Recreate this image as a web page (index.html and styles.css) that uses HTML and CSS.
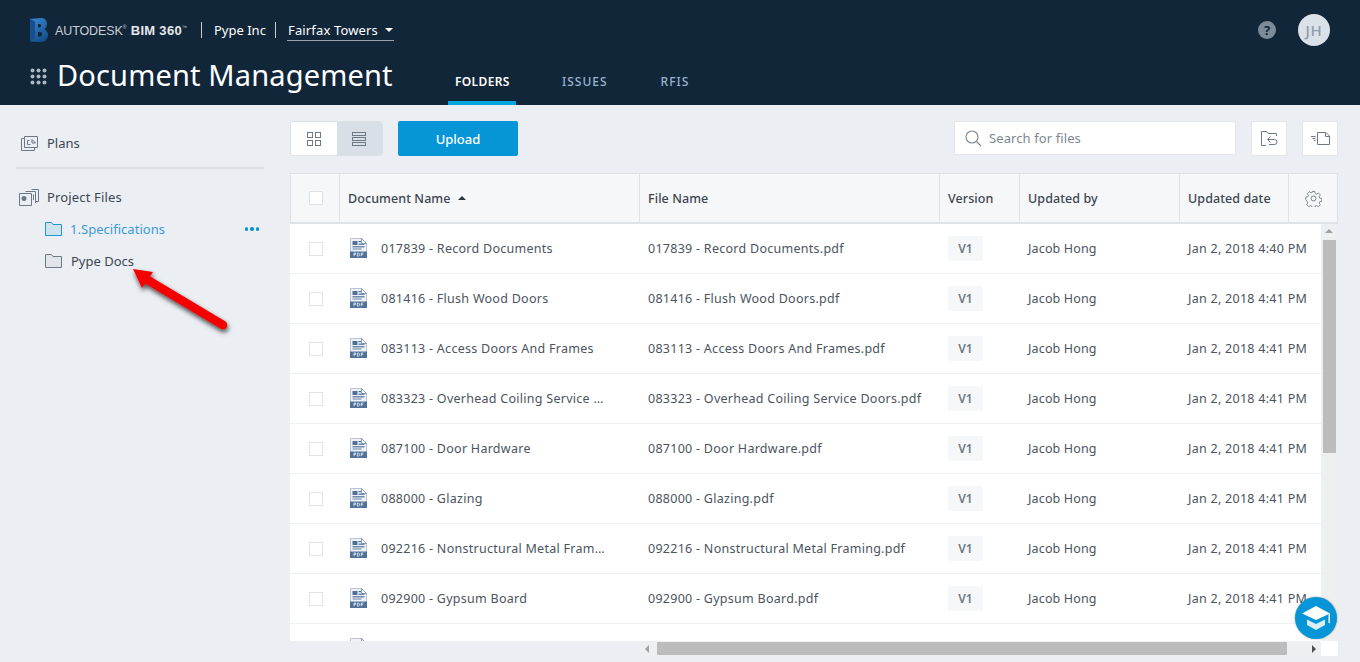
FILE: index.html
```html
<!DOCTYPE html>
<html lang="en">
<head>
<meta charset="utf-8">
<title>Document Management</title>
<link rel="stylesheet" href="styles.css">
</head>
<body>
<svg width="0" height="0" class="defs">
  <symbol id="pdf" viewBox="0 0 17 20">
    <path d="M0.5 0.5H11.5L16.5 5.5V19.5H0.5Z" fill="#eef2f6" stroke="#b5c3d2"/>
    <path d="M11.5 0.5V5.5H16.5Z" fill="#fff" stroke="#6f8cab" stroke-width=".8"/>
    <rect x="2.5" y="3" width="5" height="4" fill="#4f7199"/>
    <rect x="8.5" y="3" width="2.5" height="1.2" fill="#4f7199"/><rect x="8.5" y="5.6" width="6" height="1.2" fill="#4f7199"/>
    <rect x="2.5" y="8.2" width="12" height="1.2" fill="#4f7199"/><rect x="2.5" y="10.4" width="9" height="1.2" fill="#7c95b2"/>
    <rect x="0" y="13.5" width="17" height="6.5" fill="#4f7199"/>
    <path d="M4 15v3.2M4 15h1.6v1.5H4M7.4 15v3.2h1.2l.7-.8v-1.6l-.7-.8zM11.3 15v3.2M11.3 15h2.2M11.3 16.6h1.8" fill="none" stroke="#fff" stroke-width=".7"/>
  </symbol>
</svg>
<header class="hdr">
  <div class="hdr-top">
    <svg class="logo" width="18" height="24" viewBox="0 0 18 24"><defs><linearGradient id="lg" x1="0" y1="0" x2=".6" y2="1"><stop offset="0" stop-color="#3a8bd4"/><stop offset="1" stop-color="#15508f"/></linearGradient></defs><path fill-rule="evenodd" d="M0 1 11 0C15 0 17 2.500 17 6 17 8.500 16 10.300 14.500 11.200 16.500 12.200 18 14 18 17 18 21 15 24 11 24L0 23.500ZM8 6V9.500H9.500C10.500 9.500 11 8.800 11 7.700 11 6.600 10.500 6 9.500 6ZM8 14V18.500H10C11.300 18.500 12 17.500 12 16.200 12 14.800 11.300 14 10 14Z" fill="url(#lg)"/><path d="M0 1 5 3.500V21L0 23.500Z" fill="#174f8d"/></svg>
    <span class="brand">AUTODESK<sup class="tm">®</sup> <b>BIM 360</b><sup class="tm">™</sup></span>
    <span class="crumb first">Pype Inc</span>
    <span class="crumb project"><span>Fairfax Towers</span><i class="caret"></i></span>
    <span class="spacer"></span>
    <span class="help">?</span>
    <span class="avatar">JH</span>
  </div>
  <div class="hdr-bottom">
    <svg class="dots" width="17" height="17" viewBox="0 0 17 17" fill="#aeb6bf"><circle cx="2.500" cy="2.500" r="2"/><circle cx="8.500" cy="2.500" r="2"/><circle cx="14.500" cy="2.500" r="2"/><circle cx="2.500" cy="8.500" r="2"/><circle cx="8.500" cy="8.500" r="2"/><circle cx="14.500" cy="8.500" r="2"/><circle cx="2.500" cy="14.500" r="2"/><circle cx="8.500" cy="14.500" r="2"/><circle cx="14.500" cy="14.500" r="2"/></svg>
    <h1 class="title">Document Management</h1>
    <nav class="tabs">
      <a class="tab active">FOLDERS</a>
      <a class="tab">ISSUES</a>
      <a class="tab">RFIS</a>
    </nav>
  </div>
</header>
<div class="page">
  <aside class="side">
    <div class="side-item plans">
      <svg width="17" height="15" viewBox="0 0 17 15" fill="none" stroke="#6d7a86"><path d="M3.500 2.500H.5V14.500H13.500V11.500"/><path d="M3.500 .5H16.500V11.500H3.500Z"/><path d="M8.500 4.500H6.500V8.500H9.500M11 3.500 14.500 7H11Z"/></svg>
      <span>Plans</span>
    </div>
    <div class="side-rule"></div>
    <div class="side-item files">
      <svg width="20" height="17" viewBox="0 0 20 17" fill="none" stroke="#6d7a86"><path d="M12.500 .5H19.500V12.500H17"/><path d="M6.500 2.500H16.500V14"/><path d="M.5 4.500H12.500V16.500H.5Z" fill="#ebeff3"/><circle cx="5" cy="9.500" r="2.500" fill="#6d7a86" stroke="none"/><path d="M14.500 5.500V11"/></svg>
      <span>Project Files</span>
    </div>
    <div class="folder sel">
      <svg width="17" height="14" viewBox="0 0 17 14"><path d="M.5 13.500V.5H6.500L8 2.500H16.500V13.500Z" fill="#cfe3ef" stroke="#1f97d6"/></svg>
      <span class="folder-name">1.Specifications</span>
      <span class="more"><i></i><i></i><i></i></span>
    </div>
    <div class="folder">
      <svg width="17" height="14" viewBox="0 0 17 14"><path d="M.5 13.500V.5H6.500L8 2.500H16.500V13.500Z" fill="#e1e5ea" stroke="#6d7a86"/></svg>
      <span class="folder-name">Pype Docs</span>
    </div>
  </aside>
  <main class="main">
    <div class="toolbar">
      <div class="viewtoggle">
        <span class="vt">
          <svg width="14" height="14" viewBox="0 0 14 14" fill="none" stroke="#6d7a86"><rect x=".5" y=".5" width="5" height="5"/><rect x="8.500" y=".5" width="5" height="5"/><rect x=".5" y="8.500" width="5" height="5"/><rect x="8.500" y="8.500" width="5" height="5"/></svg>
        </span>
        <span class="vt on">
          <svg width="14" height="14" viewBox="0 0 14 14" fill="none" stroke="#6d7a86"><rect x=".5" y=".5" width="13" height="3"/><rect x=".5" y="5.500" width="13" height="3"/><rect x=".5" y="10.500" width="13" height="3"/></svg>
        </span>
      </div>
      <button class="upload">Upload</button>
      <span class="spacer"></span>
      <div class="search">
        <svg width="17" height="17" viewBox="0 0 17 17" fill="none" stroke="#7c8892" stroke-width="1.100"><circle cx="7" cy="7" r="6"/><path d="M11.500 11.500 16 16"/></svg>
        <span>Search for files</span>
      </div>
      <span class="iconbtn">
        <svg width="17" height="15" viewBox="0 0 17 15" fill="none" stroke="#6d7a86"><path d="M5 14.500H.5V.5H5.500L7 2.500H15.500V5"/><path d="M7 8.500H13.500A2.500 2.500 0 0 1 13.500 13.500H8"/><path d="M9.500 5.500 6.500 8.500 9.500 11.500"/></svg>
      </span>
      <span class="iconbtn">
        <svg width="19" height="13" viewBox="0 0 19 13" fill="none" stroke="#6d7a86"><path d="M6.500 .5H15L18.500 4V12.500H6.500Z"/><path d="M14.500 .5V4.500H18.500"/><path d="M0 4.500H4.500M1.500 6.500H4.500M3 8.500H4.500"/></svg>
      </span>
    </div>
    <div class="grid">
      <div class="gh">
        <div class="c-check"><span class="cb"></span></div>
        <div class="c-doc th">Document Name<i class="sort"></i></div>
        <div class="c-file th">File Name</div>
        <div class="c-ver th">Version</div>
        <div class="c-by th">Updated by</div>
        <div class="c-date th">Updated date</div>
        <div class="c-gear">
          <svg width="17" height="17" viewBox="0 0 24 24" fill="none" stroke="#6d7a86" stroke-width="1.300"><circle cx="12" cy="12" r="3.500"/><path d="M10 1.500h4l.6 3.200 2 .9 2.700-1.800 2.900 2.900-1.800 2.700.9 2 3.200.6v4l-3.200.6-.9 2 1.800 2.700-2.900 2.900-2.700-1.800-2 .9-.6 3.200h-4l-.6-3.200-2-.9-2.700 1.800-2.900-2.900 1.800-2.700-.9-2L.5 14v-4l3.200-.6.9-2L2.800 4.700l2.900-2.900 2.700 1.800 2-.9Z" transform="translate(.6 .6) scale(.95)"/></svg>
        </div>
      </div>
      <div class="gbody-wrap">
        <div class="gbody">
          <div class="r"><div class="c-check"><span class="cb"></span></div><div class="c-doc"><svg class="pdf" width="17" height="20"><use href="#pdf"/></svg><span class="name">017839 - Record Documents</span></div><div class="c-file">017839 - Record Documents.pdf</div><div class="c-ver"><span class="v">V1</span></div><div class="c-by">Jacob Hong</div><div class="c-date">Jan 2, 2018 4:40 PM</div></div>
          <div class="r"><div class="c-check"><span class="cb"></span></div><div class="c-doc"><svg class="pdf" width="17" height="20"><use href="#pdf"/></svg><span class="name">081416 - Flush Wood Doors</span></div><div class="c-file">081416 - Flush Wood Doors.pdf</div><div class="c-ver"><span class="v">V1</span></div><div class="c-by">Jacob Hong</div><div class="c-date">Jan 2, 2018 4:41 PM</div></div>
          <div class="r"><div class="c-check"><span class="cb"></span></div><div class="c-doc"><svg class="pdf" width="17" height="20"><use href="#pdf"/></svg><span class="name">083113 - Access Doors And Frames</span></div><div class="c-file">083113 - Access Doors And Frames.pdf</div><div class="c-ver"><span class="v">V1</span></div><div class="c-by">Jacob Hong</div><div class="c-date">Jan 2, 2018 4:41 PM</div></div>
          <div class="r"><div class="c-check"><span class="cb"></span></div><div class="c-doc"><svg class="pdf" width="17" height="20"><use href="#pdf"/></svg><span class="name">083323 - Overhead Coiling Service Doors</span></div><div class="c-file">083323 - Overhead Coiling Service Doors.pdf</div><div class="c-ver"><span class="v">V1</span></div><div class="c-by">Jacob Hong</div><div class="c-date">Jan 2, 2018 4:41 PM</div></div>
          <div class="r"><div class="c-check"><span class="cb"></span></div><div class="c-doc"><svg class="pdf" width="17" height="20"><use href="#pdf"/></svg><span class="name">087100 - Door Hardware</span></div><div class="c-file">087100 - Door Hardware.pdf</div><div class="c-ver"><span class="v">V1</span></div><div class="c-by">Jacob Hong</div><div class="c-date">Jan 2, 2018 4:41 PM</div></div>
          <div class="r"><div class="c-check"><span class="cb"></span></div><div class="c-doc"><svg class="pdf" width="17" height="20"><use href="#pdf"/></svg><span class="name">088000 - Glazing</span></div><div class="c-file">088000 - Glazing.pdf</div><div class="c-ver"><span class="v">V1</span></div><div class="c-by">Jacob Hong</div><div class="c-date">Jan 2, 2018 4:41 PM</div></div>
          <div class="r"><div class="c-check"><span class="cb"></span></div><div class="c-doc"><svg class="pdf" width="17" height="20"><use href="#pdf"/></svg><span class="name">092216 - Nonstructural Metal Framing</span></div><div class="c-file">092216 - Nonstructural Metal Framing.pdf</div><div class="c-ver"><span class="v">V1</span></div><div class="c-by">Jacob Hong</div><div class="c-date">Jan 2, 2018 4:41 PM</div></div>
          <div class="r"><div class="c-check"><span class="cb"></span></div><div class="c-doc"><svg class="pdf" width="17" height="20"><use href="#pdf"/></svg><span class="name">092900 - Gypsum Board</span></div><div class="c-file">092900 - Gypsum Board.pdf</div><div class="c-ver"><span class="v">V1</span></div><div class="c-by">Jacob Hong</div><div class="c-date">Jan 2, 2018 4:41 PM</div></div>
          <div class="r"><div class="c-check"><span class="cb"></span></div><div class="c-doc"><svg class="pdf" width="17" height="20"><use href="#pdf"/></svg></div></div>
        </div>
        <div class="vbar"><i class="up"></i><span class="vthumb"></span></div>
      </div>
      <div class="hrow">
        <div class="hbar"><i class="lf"></i><span class="hthumb"></span><i class="rt"></i></div>
        <div class="corner"></div>
      </div>
    </div>
  </main>
</div>
<svg class="arrow" width="120" height="90" viewBox="0 0 120 90"><defs><filter id="sh" x="-30%" y="-30%" width="160%" height="160%"><feDropShadow dx="1" dy="3" stdDeviation="2.500" flood-color="#000" flood-opacity=".7"/></filter></defs><g filter="url(#sh)" fill="#f40000"><path d="M101 67 24 21" stroke="#f40000" stroke-width="8.500" stroke-linecap="round" fill="none"/><path d="M11 11 31 14 20 30Z"/></g></svg>
<span class="coach"><svg width="32" height="28" viewBox="0 0 32 28" fill="#fff"><path d="M16 2 30 9.500 16 16 2 9.500Z"/><path d="M7 15.500 16 20 25 15.500V21L16 26 7 21Z" fill-opacity=".85"/><path d="M28.500 10.500V19H30V9.500Z"/></svg></span>
</body>
</html>
```
FILE: styles.css
```css
* { box-sizing: border-box; }
html, body { margin: 0; height: 100%; overflow: hidden; }
body { font-family: "Noto Sans", "Open Sans", sans-serif; font-size: 13px; color: #3c4650; background: #ebeff3; position: relative; }
.defs { position: absolute; }
.spacer { flex: 1; }

.hdr { height: 105px; background: #12263a; color: #fff; padding: 0 30px 0 30px; display: flex; flex-direction: column; }
.hdr-top { height: 60px; display: flex; align-items: center; }
.logo { margin-right: 7px; flex: none; }
.brand { font-family: "Liberation Sans", sans-serif; font-size: 12.500px; color: #c9ced4; white-space: nowrap; width: 146px; letter-spacing: -.1px; }
.brand b { color: #e6e9ec; font-weight: 700; letter-spacing: .3px; font-size: 13px; margin-left: 1px; }
.tm { font-size: 5px; vertical-align: 6px; line-height: 0; }
.crumb { font-size: 13px; color: #fff; }
.crumb.first { border-left: 1px solid #c8ccd1; padding-left: 12px; height: 16px; line-height: 16px; width: 75px; white-space: nowrap; }
.hdr-top .project { display: flex; align-items: center; padding: 0 1px 0 1px; width: 107px; border-bottom: 1px solid #99a3ad; height: 22px; white-space: nowrap; margin-left: 11px; letter-spacing: .15px; }
.hdr-top .first { border-right: 1px solid #c8ccd1; }
.caret { margin-left: auto; width: 0; height: 0; border: 4px solid transparent; border-top-color: #fff; border-bottom: 0; }
.help { width: 18px; height: 18px; border-radius: 50%; background: #7c8b99; color: #12263a; font-weight: 700; font-size: 13px; line-height: 18px; text-align: center; margin-right: 22px; }
.avatar { width: 32px; height: 32px; border-radius: 50%; background: #dbe1e8; color: #8f9ba7; font-size: 15px; font-weight: 500; line-height: 32px; text-align: center; letter-spacing: .8px; }

.hdr-bottom { height: 45px; display: flex; align-items: flex-start; }
.dots { margin-top: 8px; margin-right: 10px; flex: none; }
.title { margin: -1px 0 0; font-size: 29px; font-weight: 400; line-height: 32px; white-space: nowrap; width: 336px; letter-spacing: .15px; }
.tabs { display: flex; margin-left: 55px; height: 45px; }
.tab { height: 45px; padding: 13px 7px 0; margin-right: 39px; font-size: 12px; font-weight: 500; color: #97b5cf; line-height: 17px; letter-spacing: 1px; }
.tab.active { color: #fff; font-weight: 600; border-bottom: 4px solid #05a5de; width: 68px; white-space: nowrap; letter-spacing: .35px; }

.page { display: flex; height: 557px; }
.side { width: 290px; padding: 27px 26px 0 16px; flex: none; }
.side-item { display: flex; align-items: center; gap: 9px; height: 22px; padding-left: 5px; color: #3c4650; }
.side-item.files { padding-left: 3px; gap: 8px; margin-bottom: 10px; letter-spacing: .15px; }
.side-rule { height: 2px; background: #dce1e6; margin: 13px 0 17px; }
.folder { display: flex; align-items: center; height: 22px; margin: 0 0 10px 29px; color: #3c4650; }
.folder-name { margin-left: 9px; }
.sel .folder-name { margin-left: 8px; letter-spacing: .03px; }
.folder.sel { color: #3a9bd8; }
.more { margin-left: auto; display: flex; gap: 2px; margin-right: 5px; }
.more i { width: 3.500px; height: 3.500px; border-radius: 50%; background: #0696d7; }

.main { width: 1048px; flex: none; padding-top: 16px; }
.toolbar { display: flex; align-items: flex-start; height: 35px; }
.viewtoggle { display: flex; width: 93px; height: 35px; border-radius: 3px; overflow: hidden; border: 1px solid #dce1e6; background: #fff; margin-right: 15px; }
.vt { flex: 1; display: flex; align-items: center; justify-content: center; }
.vt.on { background: #d8dfe6; }
.upload { width: 120px; height: 35px; background: #0696d7; color: #fff; border: 0; border-radius: 2px; font: 500 13px "Noto Sans", sans-serif; }
.search { width: 282px; height: 34px; margin-top: 0; background: #fff; border: 1px solid #e2e6ea; border-radius: 2px; display: flex; align-items: center; gap: 7px; padding-left: 10px; color: #7c8892; margin-right: 15px; letter-spacing: .1px; }
.iconbtn { width: 36px; height: 35px; background: #fff; border: 1px solid #e2e6ea; border-radius: 2px; display: flex; align-items: center; justify-content: center; }
.iconbtn + .iconbtn { margin-left: 15px; }

.grid { margin-top: 17px; display: flex; flex-direction: column; }
.gh { height: 51px; display: flex; background: #f6f7f9; border: 1px solid #dde2e7; border-bottom-width: 2px; }
.gh > div { border-right: 1px solid #dde2e7; display: flex; align-items: center; }
.gh > div:last-child { border-right: 0; }
.th { font-weight: 500; color: #3c4650; padding-left: 8px; font-size: 12.500px; letter-spacing: .08px; }
.c-check { width: 49px; flex: none; display: flex; align-items: center; justify-content: center; }
.c-doc { width: 300px; flex: none; padding-left: 8px; }
.c-file { width: 300px; flex: none; padding-left: 8px; white-space: nowrap; }
.c-ver { width: 80px; flex: none; padding-left: 8px; }
.c-by { width: 160px; flex: none; padding-left: 8px; }
.r .c-by { letter-spacing: .15px; }
.c-date { width: 109px; flex: none; padding-left: 8px; white-space: nowrap; }
.c-gear { flex: 1; justify-content: center; }
.cb { width: 14px; height: 14px; margin-left: 1px; background: #fff; border: 1px solid #dfe3e8; display: block; }
.sort { display: inline-block; width: 0; height: 0; border: 4px solid transparent; border-bottom-color: #2c343c; border-top: 0; margin-left: 7px; }

.gbody-wrap { display: flex; height: 417px; }
.gbody { width: 1031px; flex: none; height: 417px; overflow: hidden; background: #fff; }
.r { height: 50px; display: flex; align-items: center; border-bottom: 1px solid #edf0f2; white-space: nowrap; color: #4a545e; font-size: 12.500px; letter-spacing: .27px; padding-left: 1px; }
.r .c-doc { display: flex; align-items: center; padding-left: 10px; }
.r .c-date { width: auto; }
.pdf { flex: none; margin: 0 14px 2px 0; }
.name { max-width: 227px; overflow: hidden; text-overflow: ellipsis; white-space: nowrap; }
.v { display: block; width: 35px; height: 25px; line-height: 25px; background: #f6f7f9; border-radius: 2px; text-align: center; font-weight: 600; color: #6f7a85; font-size: 12px; letter-spacing: 0; }
.vbar { width: 17px; background: #eeeff1; position: relative; padding-top: 16px; }
.up { position: absolute; top: 5px; left: 4px; border: 4px solid transparent; border-bottom: 4px solid #9aa0a6; border-top: 0; }
.vthumb { display: block; height: 213px; margin: 0 2px; background: #bcbcbc; }
.hrow { display: flex; height: 15px; justify-content: flex-end; }
.hbar { width: 681px; height: 15px; background: #eeeff1; display: flex; align-items: center; padding: 0 5px; }
.lf { border: 4px solid transparent; border-right-color: #9aa0a6; border-left: 0; }
.rt { border: 4px solid transparent; border-left-color: #505050; border-right: 0; margin-left: auto; }
.hthumb { margin-left: 8px; width: 630px; height: 13px; background: #bcbcbc; }
.corner { width: 17px; height: 15px; background: #fff; }

.arrow { position: absolute; left: 122px; top: 258px; }
.coach { position: absolute; left: 1295px; top: 597px; width: 42px; height: 42px; border-radius: 50%; background: #0696d7; display: flex; align-items: center; justify-content: center; box-shadow: 0 0 2px rgba(0,0,0,.4); }
```
